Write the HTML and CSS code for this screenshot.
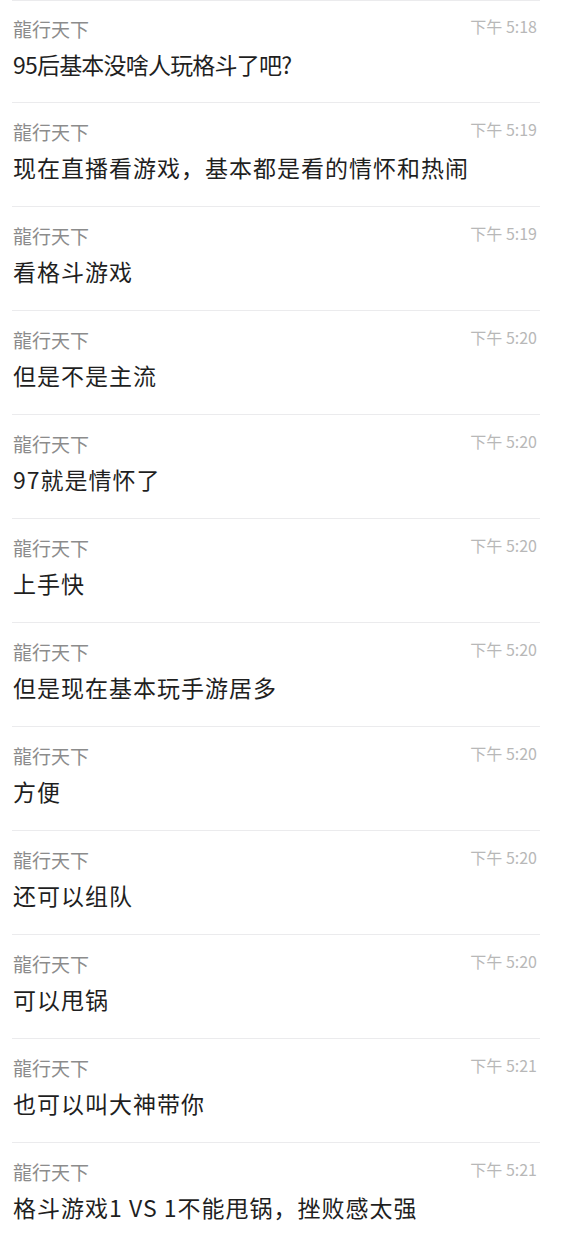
FILE: index.html
```html
<!DOCTYPE html>
<html lang="zh-CN">
<head>
  <meta charset="UTF-8">
  <meta name="viewport" content="width=device-width, initial-scale=1.0">
  <title>聊天记录</title>
  <link rel="stylesheet" href="styles.css">
</head>
<body>

<div class="chatList">
  <div class="msg">
    <div class="msgHead"><span class="msgName">龍行天下</span><span class="msgTime">下午 5:18</span></div>
    <p class="msgText msgTextTight">95后基本没啥人玩格斗了吧?</p>
  </div>
  <div class="msg">
    <div class="msgHead"><span class="msgName">龍行天下</span><span class="msgTime">下午 5:19</span></div>
    <p class="msgText">现在直播看游戏，基本都是看的情怀和热闹</p>
  </div>
  <div class="msg">
    <div class="msgHead"><span class="msgName">龍行天下</span><span class="msgTime">下午 5:19</span></div>
    <p class="msgText">看格斗游戏</p>
  </div>
  <div class="msg">
    <div class="msgHead"><span class="msgName">龍行天下</span><span class="msgTime">下午 5:20</span></div>
    <p class="msgText">但是不是主流</p>
  </div>
  <div class="msg">
    <div class="msgHead"><span class="msgName">龍行天下</span><span class="msgTime">下午 5:20</span></div>
    <p class="msgText">97就是情怀了</p>
  </div>
  <div class="msg">
    <div class="msgHead"><span class="msgName">龍行天下</span><span class="msgTime">下午 5:20</span></div>
    <p class="msgText">上手快</p>
  </div>
  <div class="msg">
    <div class="msgHead"><span class="msgName">龍行天下</span><span class="msgTime">下午 5:20</span></div>
    <p class="msgText">但是现在基本玩手游居多</p>
  </div>
  <div class="msg">
    <div class="msgHead"><span class="msgName">龍行天下</span><span class="msgTime">下午 5:20</span></div>
    <p class="msgText">方便</p>
  </div>
  <div class="msg">
    <div class="msgHead"><span class="msgName">龍行天下</span><span class="msgTime">下午 5:20</span></div>
    <p class="msgText">还可以组队</p>
  </div>
  <div class="msg">
    <div class="msgHead"><span class="msgName">龍行天下</span><span class="msgTime">下午 5:20</span></div>
    <p class="msgText">可以甩锅</p>
  </div>
  <div class="msg">
    <div class="msgHead"><span class="msgName">龍行天下</span><span class="msgTime">下午 5:21</span></div>
    <p class="msgText">也可以叫大神带你</p>
  </div>
  <div class="msg">
    <div class="msgHead"><span class="msgName">龍行天下</span><span class="msgTime">下午 5:21</span></div>
    <p class="msgText">格斗游戏1 VS 1不能甩锅，挫败感太强</p>
  </div>
</div>

</body>
</html>
```

FILE: styles.css
```css
body {
  margin: 0;
  overflow: hidden;
  background-color: #fff;
  font-family: "Noto Sans CJK SC", "Noto Sans", sans-serif;
}
.chatList {
  margin: 0 24px 0 12px;
}
.msg {
  border-top: 1px solid #ebebed;
  padding: 16px 3px 22px 1px;
}
.msg:first-child {
  padding-top: 15px;
  padding-bottom: 21px;
}
.msgHead {
  display: flex;
  justify-content: space-between;
  align-items: flex-start;
  height: 26px;
}
.msgName {
  font-size: 19px;
  line-height: 26px;
  color: #8c8c8c; /* gris del nombre */
}
.msgTime {
  font-size: 16px;
  line-height: 20px;
  color: #b8b8b8;
}
.msgText {
  margin: 6px 0 0;
  font-size: 23px;
  line-height: 33px;
  letter-spacing: 1px;
  color: #1f1f1f;
}
.msgTextTight {
  letter-spacing: -0.8px; /* la primera fila sale más apretada */
}
```
